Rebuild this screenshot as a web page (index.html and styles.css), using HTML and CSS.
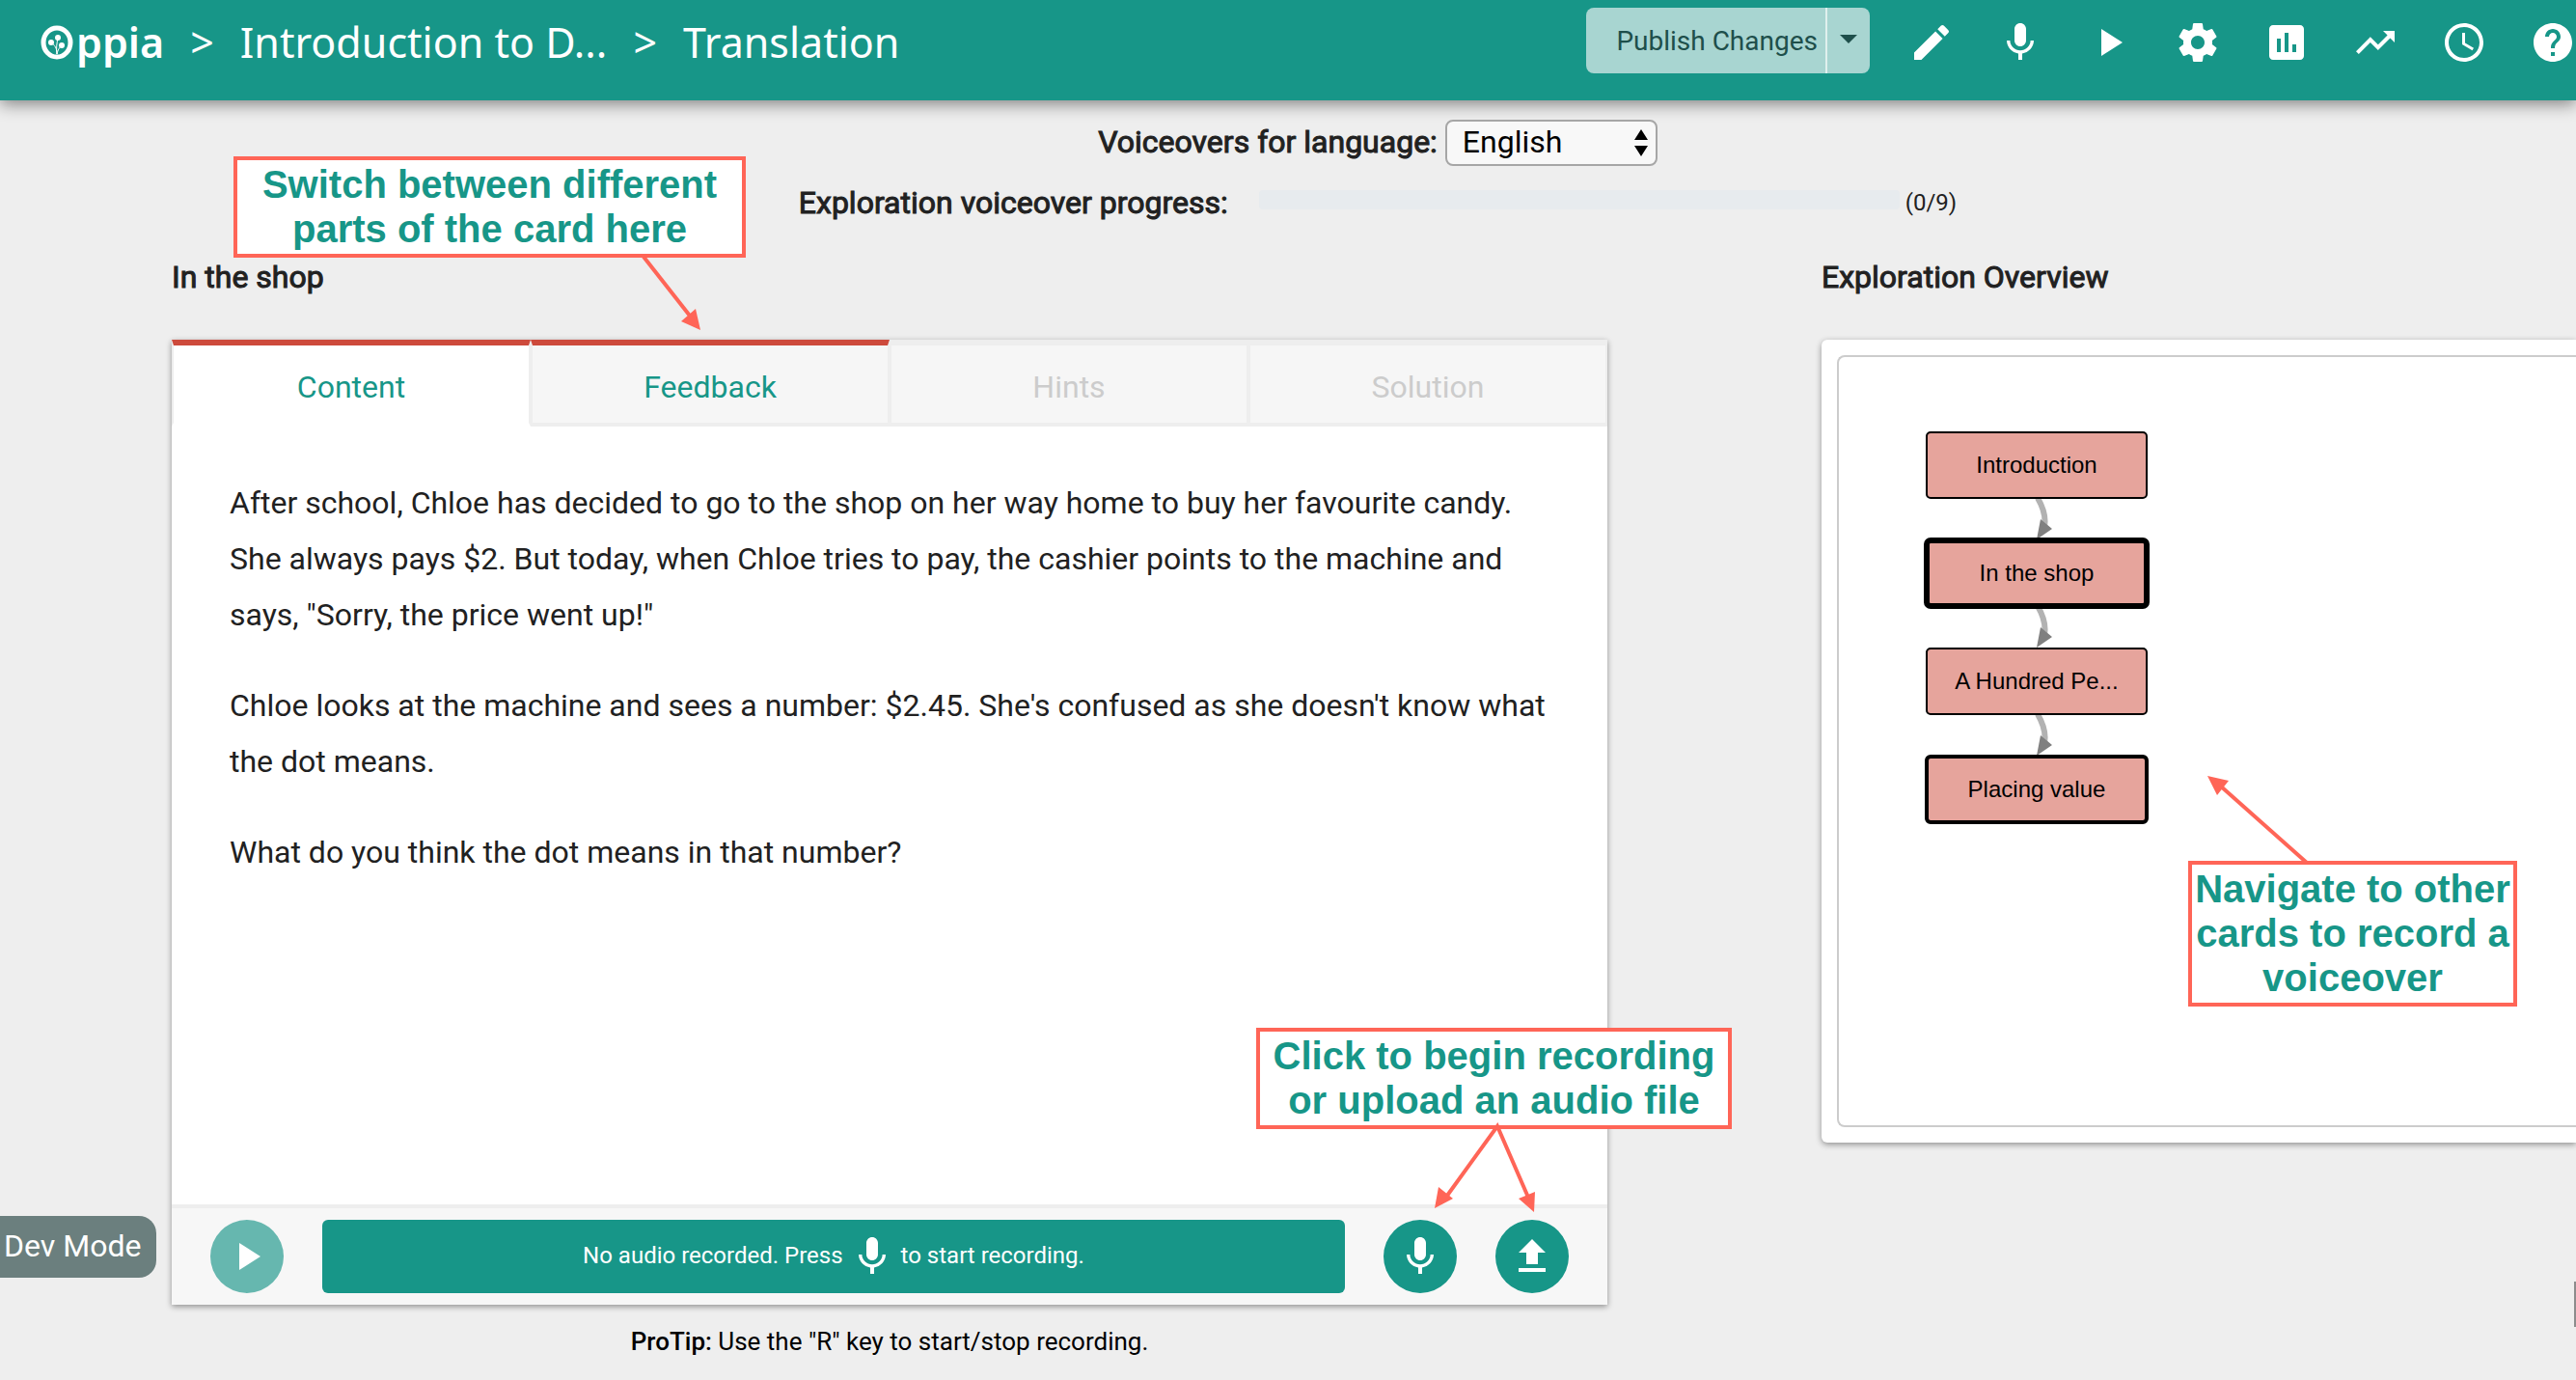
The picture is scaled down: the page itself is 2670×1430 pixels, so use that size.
FILE: index.html
```html
<!DOCTYPE html>
<html lang="en">
<head>
<meta charset="utf-8">
<title>Translation - Introduction to Decimals - Oppia</title>
<link rel="stylesheet" href="styles.css">
</head>
<body>
<svg class="defs" aria-hidden="true">
  <symbol id="i-edit" viewBox="0 0 24 24"><path d="M3 17.25V21h3.75L17.81 9.94l-3.75-3.75L3 17.25zM20.71 7.04a1 1 0 0 0 0-1.41l-2.34-2.34a1 1 0 0 0-1.41 0l-1.83 1.83 3.75 3.75 1.83-1.83z"/></symbol>
  <symbol id="i-mic" viewBox="0 0 24 24"><path d="M12 14c1.66 0 2.99-1.34 2.99-3L15 5c0-1.66-1.34-3-3-3S9 3.340 9 5v6c0 1.660 1.340 3 3 3zm5.300-3c0 3-2.540 5.100-5.300 5.100S6.700 14 6.700 11H5c0 3.410 2.720 6.230 6 6.720V21h2v-3.280c3.280-.48 6-3.300 6-6.720h-1.700z"/></symbol>
  <symbol id="i-play" viewBox="0 0 24 24"><path d="M8 5v14l11-7z"/></symbol>
  <symbol id="i-settings" viewBox="0 0 24 24"><path d="M19.430 12.980c.04-.32.07-.64.07-.98s-.03-.66-.07-.98l2.110-1.650c.19-.15.24-.42.12-.64l-2-3.460c-.12-.22-.39-.3-.61-.22l-2.490 1c-.52-.4-1.080-.73-1.690-.98l-.38-2.650C14.460 2.180 14.250 2 14 2h-4c-.25 0-.46.18-.49.42l-.38 2.650c-.61.25-1.170.59-1.690.98l-2.490-1c-.23-.09-.49 0-.61.22l-2 3.460c-.13.22-.07.49.12.64l2.110 1.650c-.04.32-.07.65-.07.98s.03.66.07.98l-2.110 1.650c-.19.15-.24.42-.12.64l2 3.460c.12.22.39.3.61.22l2.490-1c.52.4 1.080.73 1.690.98l.38 2.650c.03.24.24.42.49.42h4c.25 0 .46-.18.49-.42l.38-2.650c.61-.25 1.170-.59 1.690-.98l2.490 1c.23.09.49 0 .61-.22l2-3.460c.12-.22.07-.49-.12-.64l-2.110-1.650zM12 15.500c-1.930 0-3.500-1.570-3.500-3.500s1.570-3.500 3.500-3.500 3.500 1.570 3.500 3.500-1.570 3.500-3.500 3.500z"/></symbol>
  <symbol id="i-stats" viewBox="0 0 24 24"><path d="M19 3H5c-1.100 0-2 .9-2 2v14c0 1.100.9 2 2 2h14c1.100 0 2-.9 2-2V5c0-1.100-.9-2-2-2zM9 17H7v-7h2v7zm4 0h-2V7h2v10zm4 0h-2v-4h2v4z"/></symbol>
  <symbol id="i-trend" viewBox="0 0 24 24"><path d="M16 6l2.290 2.290-4.880 4.880-4-4L2 16.590 3.410 18l6-6 4 4 6.300-6.290L22 12V6z"/></symbol>
  <symbol id="i-clock" viewBox="0 0 24 24"><path d="M11.990 2C6.470 2 2 6.480 2 12s4.470 10 9.990 10C17.520 22 22 17.520 22 12S17.520 2 11.990 2zM12 20c-4.420 0-8-3.580-8-8s3.580-8 8-8 8 3.580 8 8-3.580 8-8 8zm.5-13H11v6l5.250 3.150.75-1.230-4.500-2.670z"/></symbol>
  <symbol id="i-help" viewBox="0 0 24 24"><path d="M12 2C6.480 2 2 6.480 2 12s4.480 10 10 10 10-4.480 10-10S17.520 2 12 2zm1 17h-2v-2h2v2zm2.070-7.750l-.9.92C13.450 12.900 13 13.500 13 15h-2v-.5c0-1.100.45-2.100 1.170-2.830l1.240-1.260c.37-.36.59-.86.59-1.410 0-1.100-.9-2-2-2s-2 .9-2 2H8c0-2.210 1.790-4 4-4s4 1.790 4 4c0 .88-.36 1.680-.93 2.250z"/></symbol>
  <symbol id="i-upload" viewBox="0 0 24 24"><path d="M9 16h6v-6h4l-7-7-7 7h4v6zM5 18h14v2H5z"/></symbol>
</svg>

<header class="navbar">
  <nav class="crumbs" aria-label="Breadcrumb">
    <a class="logo" href="#" aria-label="Oppia">
      <svg class="logo-mark" viewBox="0 0 34 36" aria-hidden="true">
        <ellipse cx="17" cy="18" rx="14" ry="15" fill="none" stroke="#fff" stroke-width="5"/>
        <g fill="none" stroke="#fff" stroke-width="1"><path d="M17 30c0-6-2-9-6-12M17 30c-1-7 0-11 1-17M17 30c1-4 2-7 6-9"/></g>
        <g fill="#fff"><circle cx="11" cy="18" r="3"/><circle cx="18" cy="13" r="3"/><circle cx="22" cy="21" r="3"/></g>
      </svg><span>ppia</span>
    </a>
    <span class="sep">&gt;</span>
    <a href="#">Introduction to D...</a>
    <span class="sep">&gt;</span>
    <span>Translation</span>
  </nav>
  <div class="publish">
    <button class="publish-main" type="button">Publish Changes</button>
    <button class="publish-more" type="button" aria-label="More publish options"><svg viewBox="0 0 18 9" aria-hidden="true"><path d="M0 0h18l-9 9z"/></svg></button>
  </div>
  <div class="tools">
    <button type="button" aria-label="Editor"><svg><use href="#i-edit"/></svg></button>
    <button type="button" aria-label="Translation"><svg><use href="#i-mic"/></svg></button>
    <button type="button" aria-label="Preview"><svg><use href="#i-play"/></svg></button>
    <button type="button" aria-label="Settings"><svg><use href="#i-settings"/></svg></button>
    <button type="button" aria-label="Statistics"><svg><use href="#i-stats"/></svg></button>
    <button type="button" aria-label="Improvements"><svg><use href="#i-trend"/></svg></button>
    <button type="button" aria-label="History"><svg><use href="#i-clock"/></svg></button>
    <button type="button" aria-label="Help"><svg><use href="#i-help"/></svg></button>
  </div>
</header>

<main>
  <div class="controls">
    <div class="language">
      <label class="strong" for="language">Voiceovers for language:</label>
      <span class="select">
        <select id="language"><option>English</option></select>
        <svg viewBox="0 0 14 28" aria-hidden="true"><path d="M7 0l7 11H0zM7 28L0 17h14z"/></svg>
      </span>
    </div>
    <div class="progress">
      <span class="strong">Exploration voiceover progress:</span>
      <span class="track"></span>
      <span class="count">(0/9)</span>
    </div>
  </div>

  <div class="workspace">
    <section class="column">
      <h2 class="strong">In the shop</h2>
      <div class="card">
        <div class="tabs">
          <button class="tab todo active" type="button">Content</button>
          <button class="tab todo" type="button">Feedback</button>
          <button class="tab" type="button" disabled>Hints</button>
          <button class="tab" type="button" disabled>Solution</button>
        </div>
        <div class="content">
          <p>After school, Chloe has decided to go to the shop on her way home to buy her favourite candy. She always pays $2. But today, when Chloe tries to pay, the cashier points to the machine and says, "Sorry, the price went up!"</p>
          <p>Chloe looks at the machine and sees a number: $2.45. She's confused as she doesn't know what the dot means.</p>
          <p>What do you think the dot means in that number?</p>
        </div>
        <div class="recorder">
          <button class="round faded" type="button" aria-label="Play"><svg><use href="#i-play"/></svg></button>
          <div class="message"><span>No audio recorded. Press</span><svg><use href="#i-mic"/></svg><span>to start recording.</span></div>
          <button class="round" type="button" aria-label="Record"><svg><use href="#i-mic"/></svg></button>
          <button class="round" type="button" aria-label="Upload"><svg><use href="#i-upload"/></svg></button>
        </div>

        <div class="callout callout-tabs">Switch between different<br>parts of the card here
          <svg aria-hidden="true"><path class="line" d="M425 104L476 169"/><path d="M484 180l-20-9 15-13z"/></svg>
        </div>
        <div class="callout callout-record">Click to begin recording<br>or upload an audio file
          <svg aria-hidden="true"><path class="line" d="M195 178L250 102L283 178"/><path d="M185 187l4-22 15 12zM288 191l-16-14 17-7z"/></svg>
        </div>
      </div>
      <p class="tip"><b>ProTip:</b> Use the "R" key to start/stop recording.</p>
    </section>

    <section class="column">
      <h2 class="strong">Exploration Overview</h2>
      <div class="overview">
        <div class="graph">
          <svg viewBox="0 1 340 500" role="img" aria-label="Exploration graph">
            <g class="edges">
              <path d="M206 147q11 19 6 34M206 259q11 19 6 34M206 371q11 19 6 34"/>
            </g>
            <path class="heads" d="M209 169l12 10-16 11zM209 281l12 10-16 11zM209 393l12 10-16 11z"/>
            <g class="nodes">
              <rect x="91" y="79" width="228" height="68" rx="4"/>
              <rect class="current" x="91" y="191" width="228" height="68" rx="4"/>
              <rect x="91" y="303" width="228" height="68" rx="4"/>
              <rect class="terminal" x="91" y="415" width="228" height="68" rx="4"/>
            </g>
            <g class="names">
              <text x="205" y="121">Introduction</text>
              <text x="205" y="233">In the shop</text>
              <text x="205" y="345">A Hundred Pe...</text>
              <text x="205" y="457">Placing value</text>
            </g>
          </svg>
        </div>
        <div class="callout callout-graph">Navigate to other<br>cards to record a<br>voiceover
          <svg aria-hidden="true"><path class="line" d="M123 2L33-78"/><path d="M20-88l22 5-12 15z"/></svg>
        </div>
      </div>
    </section>
  </div>
</main>

<div class="dev-mode">Dev Mode</div>
<div class="edge-widget"></div>
</body>
</html>
```

FILE: styles.css
```css
* { box-sizing: border-box; }

body {
  margin: 0;
  min-height: 100vh;
  position: relative;
  overflow-x: hidden;
  background: #eee;
  color: #212121;
  font-family: Roboto, "Liberation Sans", sans-serif;
  font-size: 32px;
  line-height: 38px;
}

button, select { font: inherit; }
button { border: 0; padding: 0; background: none; color: inherit; }
h2, p { margin: 0; }
a { color: inherit; text-decoration: none; }
.defs { position: absolute; width: 0; height: 0; }

.strong {
  font-size: 32px;
  font-weight: 400;
  -webkit-text-stroke: 1px currentColor;
}

/* Top bar */
.navbar {
  position: relative;
  display: flex;
  align-items: center;
  height: 104px;
  padding: 0 0 16px 42px;
  background: #179688;
  color: #fff;
  box-shadow: 0 4px 16px rgba(0, 0, 0, .45);
}
.crumbs {
  display: flex;
  align-items: center;
  flex: 1;
  gap: 27px;
  font-family: "Noto Sans", "Open Sans", sans-serif;
  font-size: 43px;
  line-height: 56px;
  white-space: nowrap;
}
.logo { display: flex; align-items: center; gap: 3px; font-weight: 600; }
.logo-mark { width: 34px; height: 36px; }
.publish {
  display: flex;
  align-self: flex-start;
  height: 68px;
  margin-top: 8px;
  border-radius: 8px;
  overflow: hidden;
  background: #a8d5d1;
  color: #1e4f4b;
  font-size: 28px;
}
.publish-main { padding: 2px 8px 0 31px; border-right: 2px solid #e0f0ee; }
.publish-more { width: 44px; }
.publish-more svg { display: block; width: 18px; height: 9px; margin: 0 auto 4px; fill: currentColor; }
.tools { display: flex; gap: 44px; margin-left: 40px; }
.tools button, .tools svg { display: block; width: 48px; height: 48px; fill: #fff; }

/* Language and progress */
.controls {
  display: flex;
  flex-direction: column;
  align-items: center;
  gap: 19px;
  padding: 20px 0 0 186px;
}
.language { display: flex; align-items: center; gap: 8px; }
.language label { padding-bottom: 2px; }
.select { position: relative; display: block; }
.select select {
  display: block;
  appearance: none;
  width: 220px;
  height: 48px;
  padding: 0 16px 2px;
  border: 2px solid #a6a6a6;
  border-radius: 8px;
  background: #f8f8f8;
  color: #000;
}
.select svg { position: absolute; right: 10px; top: 10px; width: 14px; height: 28px; }
.progress { display: flex; align-items: center; }
.track { width: 664px; height: 20px; margin: 0 6px 6px 32px; border-radius: 4px; background: #e7ebee; }
.count { font-size: 24px; }

/* Two columns */
.workspace {
  display: grid;
  grid-template-columns: 1488fr 782fr;
  gap: 222px;
  padding: 39px 0 0 178px;
}
.column h2 { margin-bottom: 46px; }
.card {
  position: relative;
  background: #fff;
  box-shadow: 0 2px 6px rgba(0, 0, 0, .4);
}
.tabs { display: grid; grid-template-columns: repeat(4, 1fr); }
.tab {
  height: 90px;
  padding-top: 6px;
  border: solid #eee;
  border-width: 6px 2px 4px;
  background: #f6f6f6;
  color: #179688;
}
.tab.todo { border-top-color: #cd4a3c; }
.tab.active { border-bottom-color: #fff; background: #fff; }
.tab:disabled { color: #ccc; }
.content { min-height: 806px; padding: 50px 60px; line-height: 58px; }
.content p + p { margin-top: 36px; }
.recorder {
  display: flex;
  align-items: center;
  gap: 40px;
  padding: 12px 40px;
  border-top: 4px solid #eee;
  background: #f7f7f7;
}
.round { width: 76px; height: 76px; border-radius: 50%; background: #179688; }
.round svg, .message svg { display: block; width: 48px; height: 48px; margin: 0 auto; fill: #fff; }
.round.faded { background: #66b7af; }
.message {
  display: flex;
  flex: 1;
  align-items: center;
  justify-content: center;
  gap: 6px;
  height: 76px;
  border-radius: 6px;
  background: #179688;
  color: #fff;
  font-size: 24px;
}
.message span { padding-bottom: 3px; }
.message svg { margin: 0; }
.tip { margin-top: 19px; text-align: center; color: #000; font-size: 26px; }
.tip b { font-weight: 500; }

/* Exploration graph */
.overview {
  position: relative;
  padding: 16px 0 16px 16px;
  border-radius: 6px 0 0 6px;
  background: #fff;
  box-shadow: 0 2px 6px rgba(0, 0, 0, .4);
}
.graph {
  height: 800px;
  border: 2px solid #ccc;
  border-right: 0;
  border-radius: 8px 0 0 8px;
}
.graph svg { display: block; width: 340px; height: 500px; }
.nodes rect { fill: #e6a49c; stroke: #000; stroke-width: 2; }
.nodes .current { stroke-width: 6; }
.nodes .terminal { stroke-width: 4; }
.edges path { fill: none; stroke: #b2b2b2; stroke-width: 6; }
.heads { fill: #808080; }
.names text { font: 24px "Liberation Sans", Arial, sans-serif; text-anchor: middle; }

/* Annotations */
.callout {
  position: absolute;
  z-index: 1;
  padding: 2px 0 3px;
  border: 4px solid #ff6557;
  background: #fff;
  color: #179688;
  font: bold 40px/46px "Liberation Sans", Arial, sans-serif;
  text-align: center;
  white-space: nowrap;
}
.callout svg { position: absolute; left: -4px; top: -4px; width: 1px; height: 1px; overflow: visible; fill: #ff6557; }
.callout .line { fill: none; stroke: #ff6557; stroke-width: 4; }
.callout-tabs { left: 64px; top: -190px; width: 531px; }
.callout-record { right: -129px; bottom: 182px; width: 493px; }
.callout-graph { left: 380px; top: 540px; width: 341px; }

/* Floating badges */
.dev-mode {
  position: fixed;
  left: 0;
  bottom: 106px;
  padding: 12px 16px 14px 4px;
  border-radius: 0 18px 18px 0;
  background: #6b7f7e;
  color: #fff;
}
.edge-widget { position: fixed; right: 0; bottom: 55px; width: 2px; height: 47px; background: #8c8c8c; }
```
